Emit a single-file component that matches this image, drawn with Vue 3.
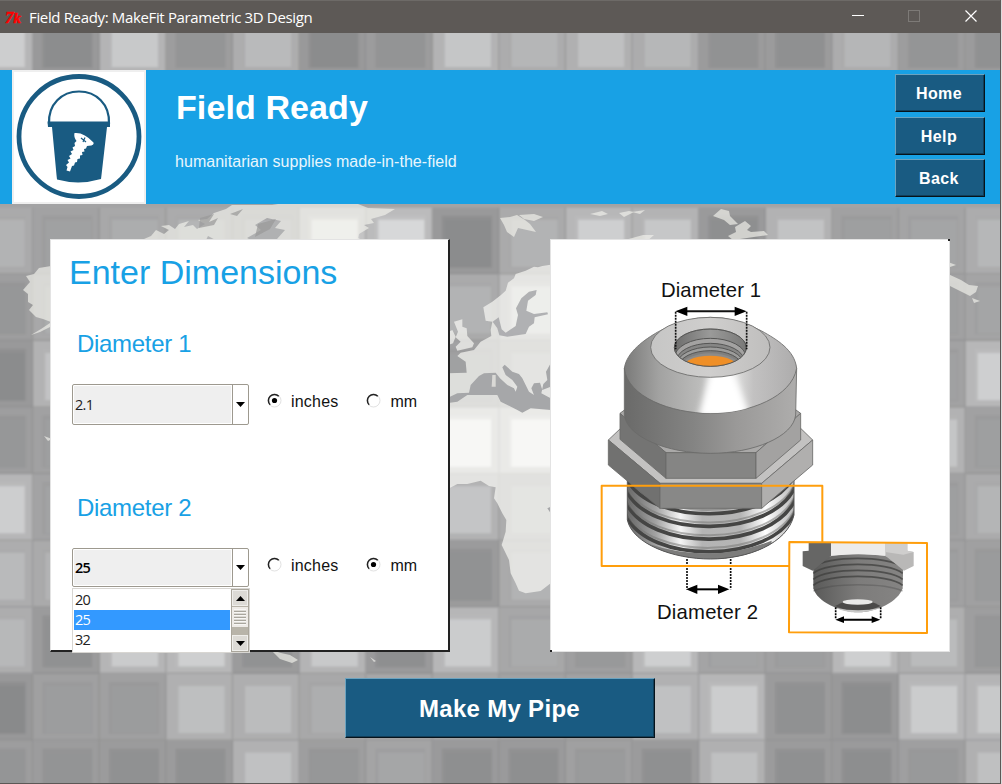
<script setup>
const P = 66.6
const rows = [
  [0, [205, 140, 200, 148, 185, 139, 147, 197, 181, 191, 182, 145, 143, 181, 148, 144]],
  [3, [178, 160, 172, 180, 176, 235, 215, 139, 178, 206, 198, 142, 194, 158, 164, 182]],
  [4, [150, 172, 160, 160, 160, 160, 160, 178, 210, 180, 180, 160, 160, 160, 158, 164]],
  [5, [139, 194, 160, 160, 160, 160, 160, 160, 180, 180, 180, 160, 160, 160, 160, 206]],
  [6, [150, 158, 160, 160, 160, 160, 160, 240, 240, 180, 180, 160, 160, 160, 196, 158]],
  [7, [205, 162, 160, 160, 160, 160, 160, 196, 182, 180, 180, 160, 160, 160, 158, 180]],
  [8, [185, 178, 160, 160, 160, 160, 160, 145, 178, 180, 180, 160, 160, 160, 158, 154]],
  [9, [183, 144, 202, 206, 145, 200, 142, 203, 170, 152, 206, 163, 157, 206, 186, 150]],
  [10, [137, 156, 155, 190, 187, 173, 170, 170, 160, 160, 192, 204, 144, 140, 203, 200]],
  [11, [148, 147, 144, 144, 192, 150, 165, 142, 142, 154, 143, 191, 143, 141, 152, 191]],
]
const tiles = rows.flatMap(([r, tones]) =>
  tones.map((v, c) => {
    const f = Math.round(164 * 0.55 + v * 0.45)
    const s = Math.round(v * 0.35 + f * 0.65 - 5)
    return {
      key: r + '-' + c,
      x: 33.3 + (c - 1) * P,
      y: 8 + r * P - 33,
      frame: `rgb(${f},${f},${f + 1})`,
      shade: `rgb(${s},${s},${s + 1})`,
      face: `rgb(${v},${v + 1},${v + 2})`,
    }
  }),
)
const navItems = ['Home', 'Help', 'Back']
const options = ['20', '25', '32']
const fields = [
  { id: 1, label: 'Diameter 1', value: '2.1', unit: 'inches', open: false },
  { id: 2, label: 'Diameter 2', value: '25', unit: 'mm', open: true },
]
const units = ['inches', 'mm']
const threads = [645, 683, 721, 759, 793]
const smallThreads = [124, 142, 160, 178]
</script>

<template>
  <div class="window">
    <div class="titlebar">
      <svg class="tk" width="22" height="22" viewBox="0 -3 22 22">
        <text x="1" y="13.500" class="tk-t">7</text>
        <text x="9.500" y="13.500" class="tk-k">k</text>
      </svg>
      <span class="caption">Field Ready: MakeFit Parametric 3D Design</span>
      <svg class="controls" width="130" height="32" viewBox="0 0 130 32">
        <path d="M2 14.500H14" stroke="#fff" />
        <rect x="58.500" y="9.500" width="11" height="11" fill="none" stroke="#7d7a77" />
        <path d="M115.500 9.500l11 11M126.500 9.500l-11 11" stroke="#fff" stroke-width="1.200" />
      </svg>
    </div>

    <div class="client">
      <svg class="backdrop" width="1000" height="750" viewBox="0 0 1000 750">
        <defs>
          <filter id="soft" x="-5%" y="-5%" width="110%" height="110%"><feGaussianBlur stdDeviation="1" /></filter>
          <filter id="soft2" x="-5%" y="-5%" width="110%" height="110%"><feGaussianBlur stdDeviation="0.6" /></filter>
        </defs>
        <rect width="1000" height="750" fill="#a3a3a4" />
        <g filter="url(#soft)">
          <g v-for="t in tiles" :key="t.key">
            <rect :x="t.x" :y="t.y" width="66.600" height="66.600" :fill="t.frame" />
            <path :d="`M${t.x} ${t.y + 66}h66.600M${t.x + 66} ${t.y}v66.600`" stroke="#888" stroke-opacity=".5" stroke-width="1.600" fill="none" />
            <rect :x="t.x + 9" :y="t.y + 8" width="50" height="52" :fill="t.shade" />
            <rect :x="t.x + 12" :y="t.y + 12" width="46" height="47" :fill="t.face" />
          </g>
        </g>
        <g filter="url(#soft2)" transform="translate(0 -33)">
          <g transform="translate(334 230) scale(.33333)" fill="#fbfaf6" fill-opacity=".68">
            <path d="M650 104L625 108 612 112 600 110 575 122 545 132 540 145 522 158 515 182 500 196 475 215 448 232 455 272 475 275 470 300 472 318 440 335 420 360 380 368 370 378 395 395 398 428 340 430V778L370 762 400 762 440 752 465 768 485 772 480 805 490 820 505 850 517 870 515 905 503 945 525 990 530 1030 545 1060 555 1082 575 1090 620 1083 650 1060Z" />
            <path d="M360 275L385 268 385 290 398 295 400 318 420 340 415 352 370 362 365 350 380 335 365 322 372 305Z" />
            <path d="M335 310l20-10 10 20-8 20-22 8z" />
          </g>
          <g transform="translate(334 230) scale(.33333)" fill="#a6a7a9">
            <path d="M476 275L494 262 503 298 515 308 545 288 552 255 546 235 562 205 585 185 608 180 605 195 582 212 577 242 600 252 640 247 642 253 602 262 600 280 585 290 575 312 520 320 496 316 490 295Z" opacity=".85" />
            <path d="M348 500L370 490 405 488 410 465 435 438 450 430 485 428 498 445 520 465 540 475 545 485 550 470 535 450 515 435 505 412 512 404 535 425 555 432 565 445 575 465 585 485 600 495 592 475 600 460 618 458 625 480 650 470 650 400 636 425 640 450 628 462 622 490 650 505V540L590 535 565 548 550 540 500 515 490 495 400 495 370 515 348 518Z" />
            <path d="M475 435h10v35h-12z" fill="#dad9d6" />
            <path d="M640 835l10 15v-20z" />
          </g>
          <g fill="#f2f1ec" fill-opacity=".67">
            <path d="M51 266l-12 2-5 6-8 2 4 6-7 8 5 4 0 8 5 3-4 5 7 7 7 2 8 3z" />
            <path d="M50 323l-9 6-10 6 9-3 10-5z" />
            <path d="M144 239l7-3 5-6 8 4 5-4-8-4 8-1 6 4 4-5 10-3-5 6 9-2 4 4 8-5-7-4 9-1 7-6 12-4 6-4h40l6-1h80l10 4 27 1-10 6-14 4 3 4-10 2 5 3-10 6-1 4 4 2-24 4H287l-10-5 8-9-10-2 6-7-14-3-12 7 6 5-14 8 6 3-30 3-15-8-4 8z" />
            <path d="M500 218l10-1 7-2 8 5 5 4 6 8-9-2-9-2-4 9-7-5-3-7zM519 215l15-1 9 3-9 4-10-2z" />
            <path d="M590 214l12-3 6 3-8 2zM619 213l10-2 5 1-10 5zM632 212l13-2-5 4zM625 240l18-5 11 0-8 7z" />
            <path d="M713 216l8-7 8 2 1 5 8 8-8 1-6-5zM735 227l10-6 6 5-4 4 4 2 13-1 4 4-35 5-5-4 8-4z" />
            <path d="M948 274l13 6 8 5 9 1-2 6-6 4-8-4-14-7zM948 262l8 3-6 2zM972 298l8 3-6 2z" />
            <path d="M271 650l10 3 9 2 8 5-6 3-12-4zM370 657l6 4-2 1zM44 436l8 3-4 2z" />
          </g>
          <path d="M200 218l14-4-5 8 9-4-4 7-15 3zM258 224l18-5-6 10-15 8zM230 214l13-5-6 7z" fill="#989899" opacity=".7" />
        </g>
      </svg>

      <header class="banner">
        <svg class="logo" width="134" height="134" viewBox="0 0 134 134">
          <rect width="134" height="134" fill="#fff" />
          <rect x="1" y="1" width="132" height="132" fill="none" stroke="#efefef" stroke-width="2" />
          <circle cx="67" cy="66.500" r="60" fill="none" stroke="#195b82" stroke-width="4.800" />
          <path d="M37 54C36 34 50 21.500 67 21.500S98 34 97 54" fill="none" stroke="#195b82" stroke-width="2.200" />
          <path d="M35.500 51.500H98V57H95L89.500 105 89 109Q67 115.500 45 109.500L44.500 105 40 57H36Z" fill="#195b82" />
          <path d="M62.500 63Q72 62 81.500 72.500Q82.500 75.500 77 75.800L75 76 74 78.500 72 79 72.500 81.500 70 82 70.500 85 68 85.500 68 88.500 65.500 89 65 92 63 92.500 62 95.500 60 96 58 101.500 54.500 100.500 55.500 97 54 95 57 92.500 55.500 90 58.500 88.500 57 86 60 84 58.500 81.500 61.500 80 60.500 77.500 63 76 62.500 73 64.500 71Q61.500 67 62.500 63Z" fill="#fff" />
          <path d="M69 68l5 4M73 67.500l-2 4.500" stroke="#195b82" stroke-width="1.200" />
        </svg>
        <div class="brand">
          <h1>Field Ready</h1>
          <p>humanitarian supplies made-in-the-field</p>
        </div>
        <nav>
          <button v-for="n in navItems" :key="n" class="tkbtn">{{ n }}</button>
        </nav>
      </header>

      <main>
        <section class="panel form">
          <h2>Enter Dimensions</h2>
          <div v-for="f in fields" :key="f.id" class="field">
            <h3>{{ f.label }}</h3>
            <div class="controls-row">
              <div class="combo" :class="{ active: f.open }">
                <span class="value">{{ f.value }}</span>
                <span class="drop"><svg width="9" height="5" viewBox="0 0 9 5"><path d="M0 0h9L4.500 5z" /></svg></span>
                <div v-if="f.open" class="popup">
                  <ul>
                    <li v-for="o in options" :key="o" :class="{ sel: o === f.value }">{{ o }}</li>
                  </ul>
                  <div class="scroll">
                    <span class="arrow"><svg width="9" height="5" viewBox="0 0 9 5"><path d="M0 5h9L4.500 0z" /></svg></span>
                    <span class="thumb"></span>
                    <span class="trough"></span>
                    <span class="arrow"><svg width="9" height="5" viewBox="0 0 9 5"><path d="M0 0h9L4.500 5z" /></svg></span>
                  </div>
                </div>
              </div>
              <label v-for="u in units" :key="u" :class="u">
                <svg width="16" height="16" viewBox="0 0 16 16">
                  <circle cx="7.500" cy="7.500" r="6.500" fill="#fff" stroke="#e2e2e2" />
                  <path d="M3.200 11.800A6 6 0 0 1 11.800 3.200" fill="none" stroke="#222" stroke-width="1.500" />
                  <circle v-if="u === f.unit" cx="7.500" cy="7.500" r="2.600" fill="#000" />
                </svg>
                <span>{{ u }}</span>
              </label>
            </div>
          </div>
        </section>

        <section class="panel figure">
          <svg width="399" height="411" viewBox="551 240 399 411">
            <defs>
              <linearGradient id="cone" x1="103" x2="620" y1="0" y2="0" gradientUnits="userSpaceOnUse">
                <stop offset="0" stop-color="#7a7a79" /><stop offset=".2" stop-color="#a2a2a1" /><stop offset=".45" stop-color="#bdbdbc" />
                <stop offset=".52" stop-color="#d8d8d8" /><stop offset=".65" stop-color="#dcdcdb" /><stop offset=".75" stop-color="#c2c1c1" /><stop offset="1" stop-color="#adacac" />
              </linearGradient>
              <linearGradient id="side" x1="103" x2="620" y1="0" y2="0" gradientUnits="userSpaceOnUse">
                <stop offset="0" stop-color="#6a6a69" /><stop offset=".4" stop-color="#848483" /><stop offset=".65" stop-color="#9a9998" /><stop offset="1" stop-color="#aeadac" />
              </linearGradient>
              <linearGradient id="metal" x1="112" x2="612" y1="0" y2="0" gradientUnits="userSpaceOnUse">
                <stop offset="0" stop-color="#686868" /><stop offset=".17" stop-color="#a2a2a2" /><stop offset=".32" stop-color="#f5f5f5" />
                <stop offset=".45" stop-color="#b4b4b4" /><stop offset=".68" stop-color="#b5b5b5" /><stop offset=".83" stop-color="#fff" /><stop offset="1" stop-color="#b8b8b8" />
              </linearGradient>
              <linearGradient id="hole" x1="253" x2="470" y1="0" y2="0" gradientUnits="userSpaceOnUse">
                <stop offset="0" stop-color="#6d6d6c" /><stop offset=".5" stop-color="#9a9a99" /><stop offset="1" stop-color="#787877" />
              </linearGradient>
              <linearGradient id="plate" x1="0" x2="1" y1="0" y2="0">
                <stop offset="0" stop-color="#c6c6c5" /><stop offset=".5" stop-color="#cfcecd" /><stop offset="1" stop-color="#bfbebd" />
              </linearGradient>
              <linearGradient id="small" x1="130" x2="400" y1="0" y2="0" gradientUnits="userSpaceOnUse">
                <stop offset="0" stop-color="#5a5a59" /><stop offset=".5" stop-color="#7d7c7b" /><stop offset="1" stop-color="#858483" />
              </linearGradient>
              <filter id="glow" x="-20%" y="-20%" width="140%" height="140%"><feGaussianBlur stdDeviation="9" /></filter>
              <clipPath id="bore"><ellipse cx="361" cy="263" rx="107" ry="56" /></clipPath>
              <clipPath id="coneclip"><path d="M103 325C110 275 165 238 205 215Q361 130 515 213C560 238 614 270 620 325C605 410 480 460 361 460S112 410 103 325Z" /></clipPath>
              <clipPath id="stem"><path d="M112 600V780C128 852 250 897 361 897S592 852 612 765V600Z" /></clipPath>
            </defs>

            <g transform="translate(590 260) scale(.33333)">
              <g clip-path="url(#stem)">
                <rect x="110" y="600" width="504" height="300" fill="url(#metal)" />
                <g fill="none">
                  <path v-for="y in threads" :key="y" :d="`M108 ${y + 5}C170 ${y + 155} 550 ${y + 155} 616 ${y - 5}`" stroke="#454544" stroke-width="11" />
                  <path v-for="y in threads" :key="'s' + y" :d="`M108 ${y - 5}C170 ${y + 143} 550 ${y + 143} 616 ${y - 16}`" stroke="#787877" stroke-width="6" opacity=".55" />
                </g>
                <path d="M170 850Q361 915 545 842L540 900H190Z" fill="#7c7c7b" />
              </g>
              <path d="M112 650V780C128 852 250 897 361 897S592 852 612 765V650" fill="none" stroke="#555" stroke-width="3" />

              <g stroke="#6a6a69" stroke-width="2.500" stroke-linejoin="round">
                <path d="M55 540L92 505H632L668 540 515 670H210Z" fill="#c3c2c1" />
                <path d="M55 540L210 670V745L55 615Z" fill="#717170" />
                <path d="M210 670H515V745H210Z" fill="#888887" />
                <path d="M515 670L668 540V615L515 745Z" fill="#b0afae" />
                <path d="M90 460L130 430H590L632 460 498 578H228Z" fill="#aaa9a8" />
                <path d="M90 460L228 578V655L90 538Z" fill="#747473" />
                <path d="M228 578H498V655H228Z" fill="#858584" />
                <path d="M498 578L632 460V540L498 655Z" fill="#a3a2a1" />
                <path d="M103 325V465C110 530 230 580 361 580S610 530 617 465L620 325Z" fill="url(#side)" />
                <path d="M103 325C110 275 165 238 205 215Q361 130 515 213C560 238 614 270 620 325C605 410 480 460 361 460S112 410 103 325Z" fill="url(#cone)" />
              </g>
              <g clip-path="url(#coneclip)">
                <path d="M362 330H430L480 470H325Z" fill="#fff" filter="url(#glow)" />
              </g>
              <g stroke="#6a6a69" stroke-width="2.500">
                <ellipse cx="361" cy="262" rx="179" ry="90" fill="url(#plate)" />
                <ellipse cx="361" cy="263" rx="108" ry="56" fill="url(#hole)" />
              </g>
              <g clip-path="url(#bore)" stroke="#555554" stroke-width="3">
                <ellipse cx="361" cy="292" rx="107" ry="57" fill="#a3a2a1" />
                <ellipse cx="361" cy="304" rx="102" ry="54" fill="#868685" />
                <ellipse cx="361" cy="312" rx="99" ry="51" fill="#9c9c9b" />
                <ellipse cx="361" cy="320" rx="95" ry="48" fill="#7f7f7e" />
                <ellipse cx="361" cy="326" rx="92" ry="46" fill="#8c8b8a" stroke="none" />
                <ellipse cx="361" cy="331" rx="90" ry="44" fill="#ef8f27" stroke="none" />
              </g>
              <ellipse cx="361" cy="263" rx="108" ry="56" fill="none" stroke="#4f4f4e" stroke-width="2.500" />
              <g stroke="#111" fill="none">
                <path d="M257 155V268M470 155V268" stroke-width="5" stroke-dasharray="6 3" />
                <path d="M280 154H445" stroke-width="6" />
              </g>
              <path d="M256 154l36-14v28zM470 154l-36-14v28z" fill="#000" />
              <path d="M291 897V988M422 897V988" stroke="#111" stroke-width="5" stroke-dasharray="6 3" />
              <path d="M310 988H400" stroke="#000" stroke-width="6" />
              <path d="M288 988l34-14v28zM418 988l-34-14v28z" fill="#000" />
              <rect x="35" y="677" width="662" height="241" fill="none" stroke="#ff9e0c" stroke-width="6" stroke-linejoin="round" />
            </g>

            <g transform="translate(770 520) scale(.33333)">
              <path d="M58 66L471 69V339L57 337Z" fill="#fff" />
              <path d="M130 120Q265 82 400 120L398 205C385 245 320 277 265 277S140 245 130 205Z" fill="url(#small)" />
              <g fill="none" stroke="#3f3f3e" stroke-width="5">
                <path v-for="y in smallThreads" :key="y" :d="`M130 ${y + 18}C170 ${y - 18} 355 ${y - 18} 398 ${y + 18}`" opacity=".75" />
                <path d="M130 213C190 188 340 188 398 213" opacity=".3" />
              </g>
              <path d="M98 94L116 92V69H183V107L128 152 98 138Z" fill="#666665" />
              <path d="M183 69H346V107Q265 98 183 107Z" fill="#ecebea" />
              <path d="M346 69H412V92L431 96V138L402 152 346 107Z" fill="#b9b8b7" />
              <path d="M346 69H412V92L431 96 400 104 346 96Z" fill="#cfcecd" />
              <path d="M195 258Q265 220 332 258Q265 290 195 258Z" fill="#4b4a49" />
              <ellipse cx="263" cy="246" rx="45" ry="8" fill="#e9e9e8" />
              <path d="M195 263Q265 278 332 263Q300 276 265 277T195 263Z" fill="#c7c7c6" />
              <path d="M197 262V298M332 262V298" stroke="#000" stroke-width="5" stroke-dasharray="6 3" />
              <path d="M212 299H318" stroke="#000" stroke-width="6" />
              <path d="M196 299l26-10v20zM331 299l-26-10v20z" fill="#000" />
              <path d="M58 66L471 69V339L57 337Z" fill="none" stroke="#ff9e0c" stroke-width="6" stroke-linejoin="round" />
            </g>
            <text x="661" y="297" textLength="100">Diameter 1</text>
            <text x="657" y="619" textLength="101">Diameter 2</text>
          </svg>
        </section>
      </main>

      <button class="tkbtn make">Make My Pipe</button>
    </div>
  </div>
</template>

<style>
body {
  background: #dcdcdc;
}
</style>

<style scoped>
* {
  box-sizing: border-box;
}
.window {
  width: 1001px;
  height: 784px;
  overflow: hidden;
  border-right: 1px solid #5c5856;
  border-bottom: 1px solid #5c5856;
  font-family: 'Liberation Sans', sans-serif;
}
.titlebar {
  display: flex;
  align-items: center;
  height: 33px;
  background: #5d5956;
  border-top: 1px solid #6d6a67;
  color: #fff;
}
.tk {
  margin-left: 4px;
  flex: none;
  overflow: visible;
}
.tk text {
  fill: #f00;
  stroke: #f00;
  stroke-width: 0.5px;
  font-family: 'Liberation Serif', serif;
  font-style: italic;
  font-weight: bold;
}
.tk .tk-t {
  font-size: 17px;
}
.tk .tk-k {
  font-size: 15px;
}
.caption {
  margin-left: 3px;
  font: 15px 'Open Sans', sans-serif;
  letter-spacing: -0.35px;
  white-space: nowrap;
}
.controls {
  margin-left: auto;
  margin-right: 20px;
}
.client {
  position: relative;
  display: flex;
  flex-direction: column;
  height: 750px;
}
.backdrop {
  position: absolute;
  inset: 0;
}
.banner {
  position: relative;
  display: flex;
  height: 134px;
  margin-top: 37px;
  padding-left: 12px;
  background: #18a1e5;
}
.brand {
  margin-left: 29px;
  color: #fff;
}
h1 {
  margin: 17px 0 0 1px;
  font-size: 34px;
  line-height: 40px;
  letter-spacing: 0.1px;
}
.brand p {
  margin: 25px 0 0;
  font-size: 16px;
  line-height: 20px;
  letter-spacing: 0.04px;
  color: #e8f6fd;
}
nav {
  display: flex;
  flex-direction: column;
  gap: 4.500px;
  margin: 4px 15px 0 auto;
}
.tkbtn {
  width: 90px;
  height: 38px;
  padding: 2px 2px 0 0;
  border: 1px solid;
  border-color: #6ba3c0 #06131b #06131b #6ba3c0;
  box-shadow: inset -1px -1px #123f5a;
  border-radius: 0;
  background: #195b82;
  color: #fff;
  font: bold 16px 'Liberation Sans', sans-serif;
  letter-spacing: 0.4px;
}
.make {
  position: relative;
  width: 310px;
  height: 60px;
  margin: 26px 0 0 345px;
  padding: 2px 1px 0 0;
  font-size: 24px;
  letter-spacing: 0.3px;
}
main {
  position: relative;
  display: flex;
  gap: 100px;
  margin-top: 35px;
  padding-left: 50px;
}
.panel {
  width: 400px;
  height: 413px;
  background: #fff;
  border: 1px solid #e3e3e3;
}
.form {
  border-right: 2px solid #222;
  border-bottom: 2px solid #222;
  padding-left: 21px;
}
.figure {
  position: relative;
}
.figure::before,
.figure::after {
  content: '';
  position: absolute;
  width: 2px;
  height: 2px;
  background: #222;
}
.figure::before {
  top: -1px;
  right: -1px;
}
.figure::after {
  left: -1px;
  bottom: -1px;
}
.figure svg {
  display: block;
}
.figure text {
  font-size: 20.300px;
  fill: #111;
}
h2 {
  margin: 12px 0 0 -3px;
  font-size: 34px;
  line-height: 40px;
  font-weight: normal;
  color: #18a1e5;
}
.field {
  margin-top: 38px;
  height: 126px;
}
h3 {
  margin: 0 0 0 5px;
  font-size: 24px;
  line-height: 28px;
  font-weight: normal;
  letter-spacing: -0.3px;
  color: #18a1e5;
}
.controls-row {
  display: flex;
  margin-top: 26px;
}
.combo {
  position: relative;
  display: flex;
  width: 177px;
  height: 41px;
  border: 1px solid #9d998f;
  border-radius: 2px;
  background: #fff;
  font: 14.500px 'Open Sans', sans-serif;
  letter-spacing: -0.7px;
}
.combo.active {
  height: 39px;
}
.value {
  flex: 1;
  margin: 1px;
  padding-left: 1px;
  line-height: 38px;
  background: #efefef;
  color: #222;
}
.active .value {
  color: #000;
  font-weight: 600;
  line-height: 36px;
}
.drop {
  display: flex;
  width: 16px;
  align-items: center;
  justify-content: center;
  border-left: 1px solid #9d998f;
}
.popup {
  position: absolute;
  top: 39px;
  left: -1px;
  display: flex;
  width: 178px;
  height: 65px;
  border: 1px solid #d8d6d2;
  background: #fff;
}
ul {
  flex: 1;
  margin: 1px 1px 0;
  padding: 0;
  list-style: none;
  color: #222;
}
li {
  height: 20px;
  line-height: 20px;
  padding-left: 1px;
}
li.sel {
  background: #3399ff;
  color: #fff;
}
.scroll {
  display: flex;
  flex-direction: column;
  width: 18px;
  border: 1px solid #aaa69c;
  background: #b8b4a9;
}
.arrow {
  display: flex;
  height: 16px;
  align-items: center;
  justify-content: center;
  background: #dcdad5;
  border: 1px solid #efeeeb;
}
.thumb {
  height: 20px;
  margin-top: 1px;
  border: 2px solid #eeebe7;
  background: repeating-linear-gradient(#f8f7f5 0 1px, #dcdad5 1px 2px, #a9a69d 2px 3px);
}
.trough {
  flex: 1;
}
label {
  display: flex;
  align-items: center;
  height: 20px;
  margin-top: 7px;
  font-size: 16px;
  color: #111;
}
label span {
  margin: 1px 0 0 8px;
}
label.inches {
  margin-left: 18px;
}
label.mm {
  margin-left: 28px;
}
label.inches span {
  letter-spacing: 0.2px;
}
</style>
